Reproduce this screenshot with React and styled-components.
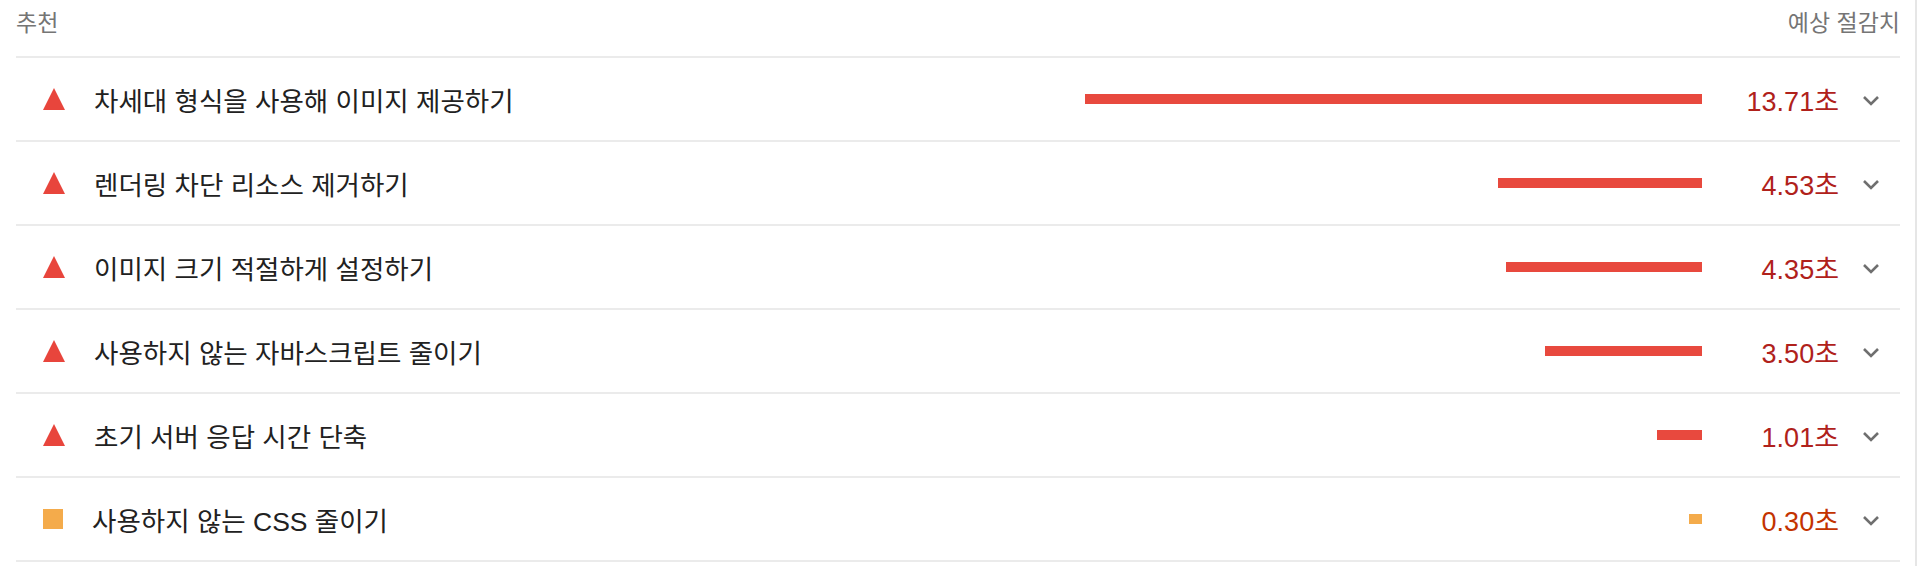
import styled, { createGlobalStyle } from "styled-components";

const GlobalStyle = createGlobalStyle`
  html, body {
    margin: 0;
    padding: 0;
    background: #fff;
  }
  body {
    font-family: "Liberation Sans", "Noto Sans CJK KR", sans-serif;
  }
`;

const audits = [
  { title: "차세대 형식을 사용해 이미지 제공하기", seconds: 13.71, level: "fail" },
  { title: "렌더링 차단 리소스 제거하기", seconds: 4.53, level: "fail" },
  { title: "이미지 크기 적절하게 설정하기", seconds: 4.35, level: "fail" },
  { title: "사용하지 않는 자바스크립트 줄이기", seconds: 3.5, level: "fail" },
  { title: "초기 서버 응답 시간 단축", seconds: 1.01, level: "fail" },
  { title: "사용하지 않는 CSS 줄이기", seconds: 0.3, level: "average" },
];

const maxSeconds = 13.71;

const App = () => {
  return (
    <>
      <GlobalStyle />
      <Panel>
        <Header>
          <span>추천</span>
          <span>예상 절감치</span>
        </Header>
        <List>
          {audits.map((audit) => (
            <Row key={audit.title}>
              {audit.level === "fail" ? <Triangle /> : <Square />}
              <Title>{audit.title}</Title>
              <Sparkline>
                <Bar
                  $level={audit.level}
                  style={{ width: `${(audit.seconds / maxSeconds) * 100}%` }}
                />
              </Sparkline>
              <Value $level={audit.level}>{audit.seconds.toFixed(2)}초</Value>
              <Chevron>
                <svg width="18" height="11" viewBox="0 0 18 11">
                  <polyline
                    points="2,2 9,9 16,2"
                    fill="none"
                    stroke="#6f6f6f"
                    strokeWidth="2.6"
                  />
                </svg>
              </Chevron>
            </Row>
          ))}
        </List>
      </Panel>
    </>
  );
};

export default App;

const Panel = styled.div`
  width: 1884px;
  min-height: 566px;
  padding: 0 15px 0 16px;
  border-right: 2px solid #e6e6e6;
`;

const Header = styled.div`
  height: 56px;
  display: flex;
  justify-content: space-between;
  align-items: flex-start;
  padding-top: 8px;
  box-sizing: border-box;
  font-size: 23px;
  line-height: 30px;
  color: #757575;
`;

const List = styled.div`
  border-bottom: 2px solid #ebebeb;
`;

const Row = styled.div`
  height: 82px;
  border-top: 2px solid #ebebeb;
  display: flex;
  align-items: center;
  padding: 0 20px 0 27px;
`;

const Triangle = styled.div`
  width: 0;
  height: 0;
  border-left: 11.5px solid transparent;
  border-right: 11.5px solid transparent;
  border-bottom: 22px solid #e8453c;
  flex-shrink: 0;
`;

const Square = styled.div`
  width: 20px;
  height: 20px;
  background: #f4ab4b;
  flex-shrink: 0;
`;

const Title = styled.div`
  flex: 1;
  margin-left: 29px;
  font-size: 26.5px;
  color: #212121;
  white-space: nowrap;
`;

const Sparkline = styled.div`
  width: 617px;
  display: flex;
  justify-content: flex-end;
  flex-shrink: 0;
`;

const Bar = styled.div`
  height: 10px;
  background: ${(p) => (p.$level === "fail" ? "#e8493e" : "#f4ab4b")};
`;

const Value = styled.div`
  width: 137px;
  text-align: right;
  font-size: 27px;
  color: ${(p) => (p.$level === "fail" ? "#b0211b" : "#c33300")};
  flex-shrink: 0;
`;

const Chevron = styled.div`
  width: 41px;
  display: flex;
  justify-content: flex-end;
  padding-top: 3px;
  flex-shrink: 0;
`;
